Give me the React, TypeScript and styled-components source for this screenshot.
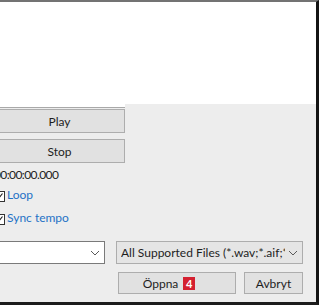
import styled, { createGlobalStyle } from 'styled-components'

const Global = createGlobalStyle`
    html, body {
        margin: 0;
        padding: 0;
        background: #ededed;
    }
    body {
        font-family: Lato, "Noto Sans", sans-serif;
        font-size: 12px;
        color: #1e1e1e;
        overflow: hidden;
    }
`

const Window = styled.div`
    width: 316px;
    height: 300px;
    border-top: 2px solid #737373;
    border-right: 3px solid #141414;
    border-bottom: 3px solid #1c1c1c;
    background: #ededed;
    display: flex;
    flex-direction: column;
    overflow: hidden;
`

const Preview = styled.div`
    height: 102px;
    background: #ffffff;
    flex-shrink: 0;
`

const Controls = styled.div`
    flex: 1;
    display: flex;
    flex-direction: column;
    padding-right: 13px;
`

const LeftColumn = styled.div`
    width: 131px;
    margin-left: -6px;
    display: flex;
    flex-direction: column;
`

const Strip = styled.div`
    height: 3px;
    background: #ffffff;
    border-bottom: 1px solid #a9a9a9;
`

const PushButton = styled.button<{ $top?: number; $width?: number; $split?: boolean }>`
    height: 24px;
    ${p => (p.$width ? `width: ${p.$width}px; height: 22px;` : '')}
    margin-top: ${p => p.$top ?? 0}px;
    background: #e1e1e1;
    border: 1px solid #adadad;
    font: inherit;
    color: #1e1e1e;
    padding: 0 ${p => (p.$split ? 16 : 0)}px 0 0;
    display: flex;
    align-items: center;
    justify-content: center;
    gap: 5px;
`

const TimeLabel = styled.div`
    margin-top: 4px;
    line-height: 16px;
    letter-spacing: -0.6px;
`

const CheckRow = styled.label<{ $top: number }>`
    display: flex;
    align-items: center;
    gap: 2px;
    margin-top: ${p => p.$top}px;
    line-height: 16px;
    color: #1f72c6;
`

const Box = styled.span`
    width: 11px;
    height: 11px;
    margin-top: 3px;
    border: 1px solid #333333;
    background: #ffffff;
    box-sizing: border-box;
    display: flex;
    align-items: center;
    justify-content: center;
`

const FieldRow = styled.div`
    display: flex;
    align-items: center;
    margin-top: 15px;
    margin-left: -10px;
    gap: 11px;
`

const Combo = styled.div<{ $filled?: boolean; $width: number }>`
    width: ${p => p.$width}px;
    height: 23px;
    box-sizing: border-box;
    border: 1px solid ${p => (p.$filled ? '#adadad' : '#7a7a7a')};
    background: ${p => (p.$filled ? '#e5e5e5' : '#ffffff')};
    display: flex;
    align-items: center;
    padding: 0 4px 0 4px;
    gap: 3px;
    overflow: hidden;
`

const ComboText = styled.span`
    flex: 1;
    white-space: nowrap;
    overflow: hidden;
`

const ButtonRow = styled.div`
    display: flex;
    margin-top: 8px;
    margin-left: 118px;
    gap: 8px;
`

const Badge = styled.span`
    background: #d42030;
    color: #ffffff;
    font-weight: 700;
    width: 12px;
    height: 13px;
    line-height: 13px;
    text-align: center;
    font-size: 11px;
`

function Chevron() {
    return (
        <svg width="10" height="6" viewBox="0 0 10 6">
            <path d="M1 1 L5 5 L9 1" fill="none" stroke="#5a5a5a" strokeWidth="1" />
        </svg>
    )
}

function Check() {
    return (
        <svg width="9" height="9" viewBox="0 0 9 9">
            <path d="M1.5 4.5 L3.5 6.5 L7.5 1.5" fill="none" stroke="#222222" strokeWidth="1.2" />
        </svg>
    )
}

export default function App() {
    return (
        <>
            <Global />
            <Window>
                <Preview />
                <Controls>
                    <LeftColumn>
                        <Strip />
                        <PushButton $top={1}>Play</PushButton>
                        <PushButton $top={6}>Stop</PushButton>
                        <TimeLabel>00:00:00.000</TimeLabel>
                        <CheckRow $top={4}><Box><Check /></Box>Loop</CheckRow>
                        <CheckRow $top={7}><Box><Check /></Box>Sync tempo</CheckRow>
                    </LeftColumn>
                    <FieldRow>
                        <Combo $width={115}>
                            <ComboText></ComboText>
                            <Chevron />
                        </Combo>
                        <Combo $filled $width={187}>
                            <ComboText>All Supported Files (*.wav;*.aif;*.mp3)</ComboText>
                            <Chevron />
                        </Combo>
                    </FieldRow>
                    <ButtonRow>
                        <PushButton $width={118} $split>Öppna <Badge>4</Badge></PushButton>
                        <PushButton $width={59}>Avbryt</PushButton>
                    </ButtonRow>
                </Controls>
            </Window>
        </>
    )
}
